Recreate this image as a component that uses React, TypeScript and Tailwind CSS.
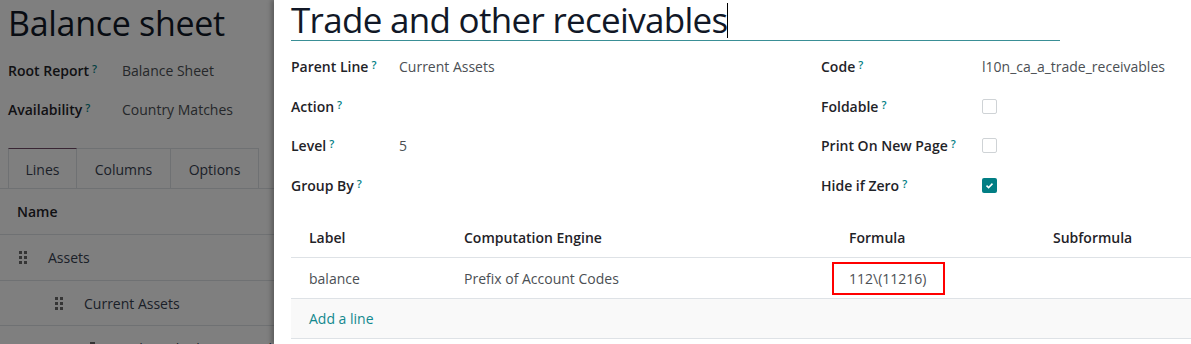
const font = { fontFamily: '"Open Sans", "Noto Sans", sans-serif' }

function Help() {
  return <sup className="ml-[3px] text-[11px] font-semibold text-[#017e84] relative -top-[3px]">?</sup>
}

function Grip({ className = '' }: { className?: string }) {
  return (
    <span className={`inline-grid grid-cols-2 gap-[2px] ${className}`}>
      {Array.from({ length: 6 }).map((_, i) => (
        <span key={i} className="w-[3px] h-[3px] bg-[#6b6b6b]" />
      ))}
    </span>
  )
}

function Checkbox({ checked }: { checked?: boolean }) {
  return checked ? (
    <span className="flex items-center justify-center w-[15px] h-[15px] rounded-[2px] bg-[#017e84]">
      <svg viewBox="0 0 12 12" className="w-[9px] h-[9px]">
        <path d="M2 6.2 L4.8 8.8 L10 3.5" fill="none" stroke="white" strokeWidth="2" />
      </svg>
    </span>
  ) : (
    <span className="block w-[15px] h-[15px] rounded-[2px] border border-[#cfd3d6] bg-white" />
  )
}

function Field({ label, value, children, labelWidth }: { label: string; value?: string; children?: React.ReactNode; labelWidth: string }) {
  return (
    <div className="flex items-center h-[39.5px]">
      <div className={`${labelWidth} shrink-0 font-semibold text-[#1f2328]`}>
        {label}
        <Help />
      </div>
      <div className="text-[#4b4f54]">{value}{children}</div>
    </div>
  )
}

function BackgroundPage() {
  return (
    <div className="relative w-[274px] shrink-0 h-full bg-white overflow-hidden text-[14px]">
      <div className="pl-2">
        <h1 className="text-[34px] tracking-[-0.3px] leading-none text-[#111827] pt-[6px] h-[49px]">Balance sheet</h1>
        <div className="flex items-center h-[39px] mt-[2px]">
          <span className="w-[114px] font-semibold text-[#1f2328]">Root Report<Help /></span>
          <span className="text-[#4b4f54]">Balance Sheet</span>
        </div>
        <div className="flex items-center h-[39px]">
          <span className="w-[114px] font-semibold text-[#1f2328]">Availability<Help /></span>
          <span className="text-[#4b4f54]">Country Matches</span>
        </div>
      </div>
      <div className="mt-[19px] flex pl-2 border-b border-[#dee2e6] h-[41px]">
        <div className="w-[69px] flex items-center justify-center border border-b-0 border-[#dee2e6] border-t-[#714b67] text-[#374151] pt-[2px]">Lines</div>
        <div className="w-[94px] flex items-center justify-center border-r border-t border-[#dee2e6] text-[#374151] pt-[2px]">Columns</div>
        <div className="w-[88px] flex items-center justify-center border-r border-t border-[#dee2e6] text-[#374151] pt-[2px]">Options</div>
      </div>
      <div className="h-[46px] flex items-center pl-[17px] font-semibold text-[#1f2328] border-b border-[#dee2e6]">Name</div>
      <div className="h-[46px] flex items-center pl-[19px] gap-[21px] text-[#374151] border-b border-[#dee2e6]">
        <Grip />
        <span>Assets</span>
      </div>
      <div className="h-[45px] flex items-center pl-[55px] gap-[21px] text-[#374151] border-b border-[#dee2e6]">
        <Grip />
        <span>Current Assets</span>
      </div>
      <div className="h-[45px] flex items-center pl-[90px] gap-[21px] text-[#374151] whitespace-nowrap">
        <Grip />
        <span>Trade and other receivables</span>
      </div>
      <div className="absolute inset-0 bg-black/50" />
    </div>
  )
}

export default function App() {
  return (
    <div className="flex w-[1191px] h-[344px] overflow-hidden bg-white text-[14px]" style={font}>
      <BackgroundPage />
      <div className="flex-1 h-full bg-white shadow-[-3px_0_4px_rgba(0,0,0,0.25)] relative pl-[17px]">
        <div className="w-[769px] border-b border-[#3a8f96] h-[41px] flex items-start">
          <span className="text-[35px] tracking-[-0.7px] leading-[39px] text-[#111827] whitespace-nowrap">Trade and other receivables</span>
          <span className="w-[1px] h-[35px] bg-black mt-[3px]" />
        </div>
        <div className="flex mt-[6px]">
          <div className="w-[530px]">
            <Field labelWidth="w-[108px]" label="Parent Line" value="Current Assets" />
            <Field labelWidth="w-[108px]" label="Action" />
            <Field labelWidth="w-[108px]" label="Level" value="5" />
            <Field labelWidth="w-[108px]" label="Group By" />
          </div>
          <div>
            <Field labelWidth="w-[161px]" label="Code" value="l10n_ca_a_trade_receivables" />
            <Field labelWidth="w-[161px]" label="Foldable"><Checkbox /></Field>
            <Field labelWidth="w-[161px]" label="Print On New Page"><Checkbox /></Field>
            <Field labelWidth="w-[161px]" label="Hide if Zero"><Checkbox checked /></Field>
          </div>
        </div>
        <div className="mt-[12px]">
          <div className="grid grid-cols-[155px_385px_204px_1fr] h-[41px] items-center border-b border-[#dee2e6] font-semibold text-[#1f2328]">
            <div className="pl-[18px]">Label</div>
            <div className="pl-[18px]">Computation Engine</div>
            <div className="pl-[18px]">Formula</div>
            <div className="pl-[18px]">Subformula</div>
          </div>
          <div className="grid grid-cols-[155px_385px_204px_1fr] h-[41px] items-center border-b border-[#dee2e6] text-[#4b4f54]">
            <div className="pl-[18px]">balance</div>
            <div className="pl-[18px]">Prefix of Account Codes</div>
            <div className="pl-[1px]">
              <div className="w-[113px] h-[33px] border-2 border-[#ff0000] flex items-center pl-[15px]">112\(11216)</div>
            </div>
            <div />
          </div>
          <div className="h-[40px] flex items-center pl-[18px] bg-[#f9f9f9] border-b border-[#dee2e6] text-[#12888e]">Add a line</div>
        </div>
      </div>
    </div>
  )
}
